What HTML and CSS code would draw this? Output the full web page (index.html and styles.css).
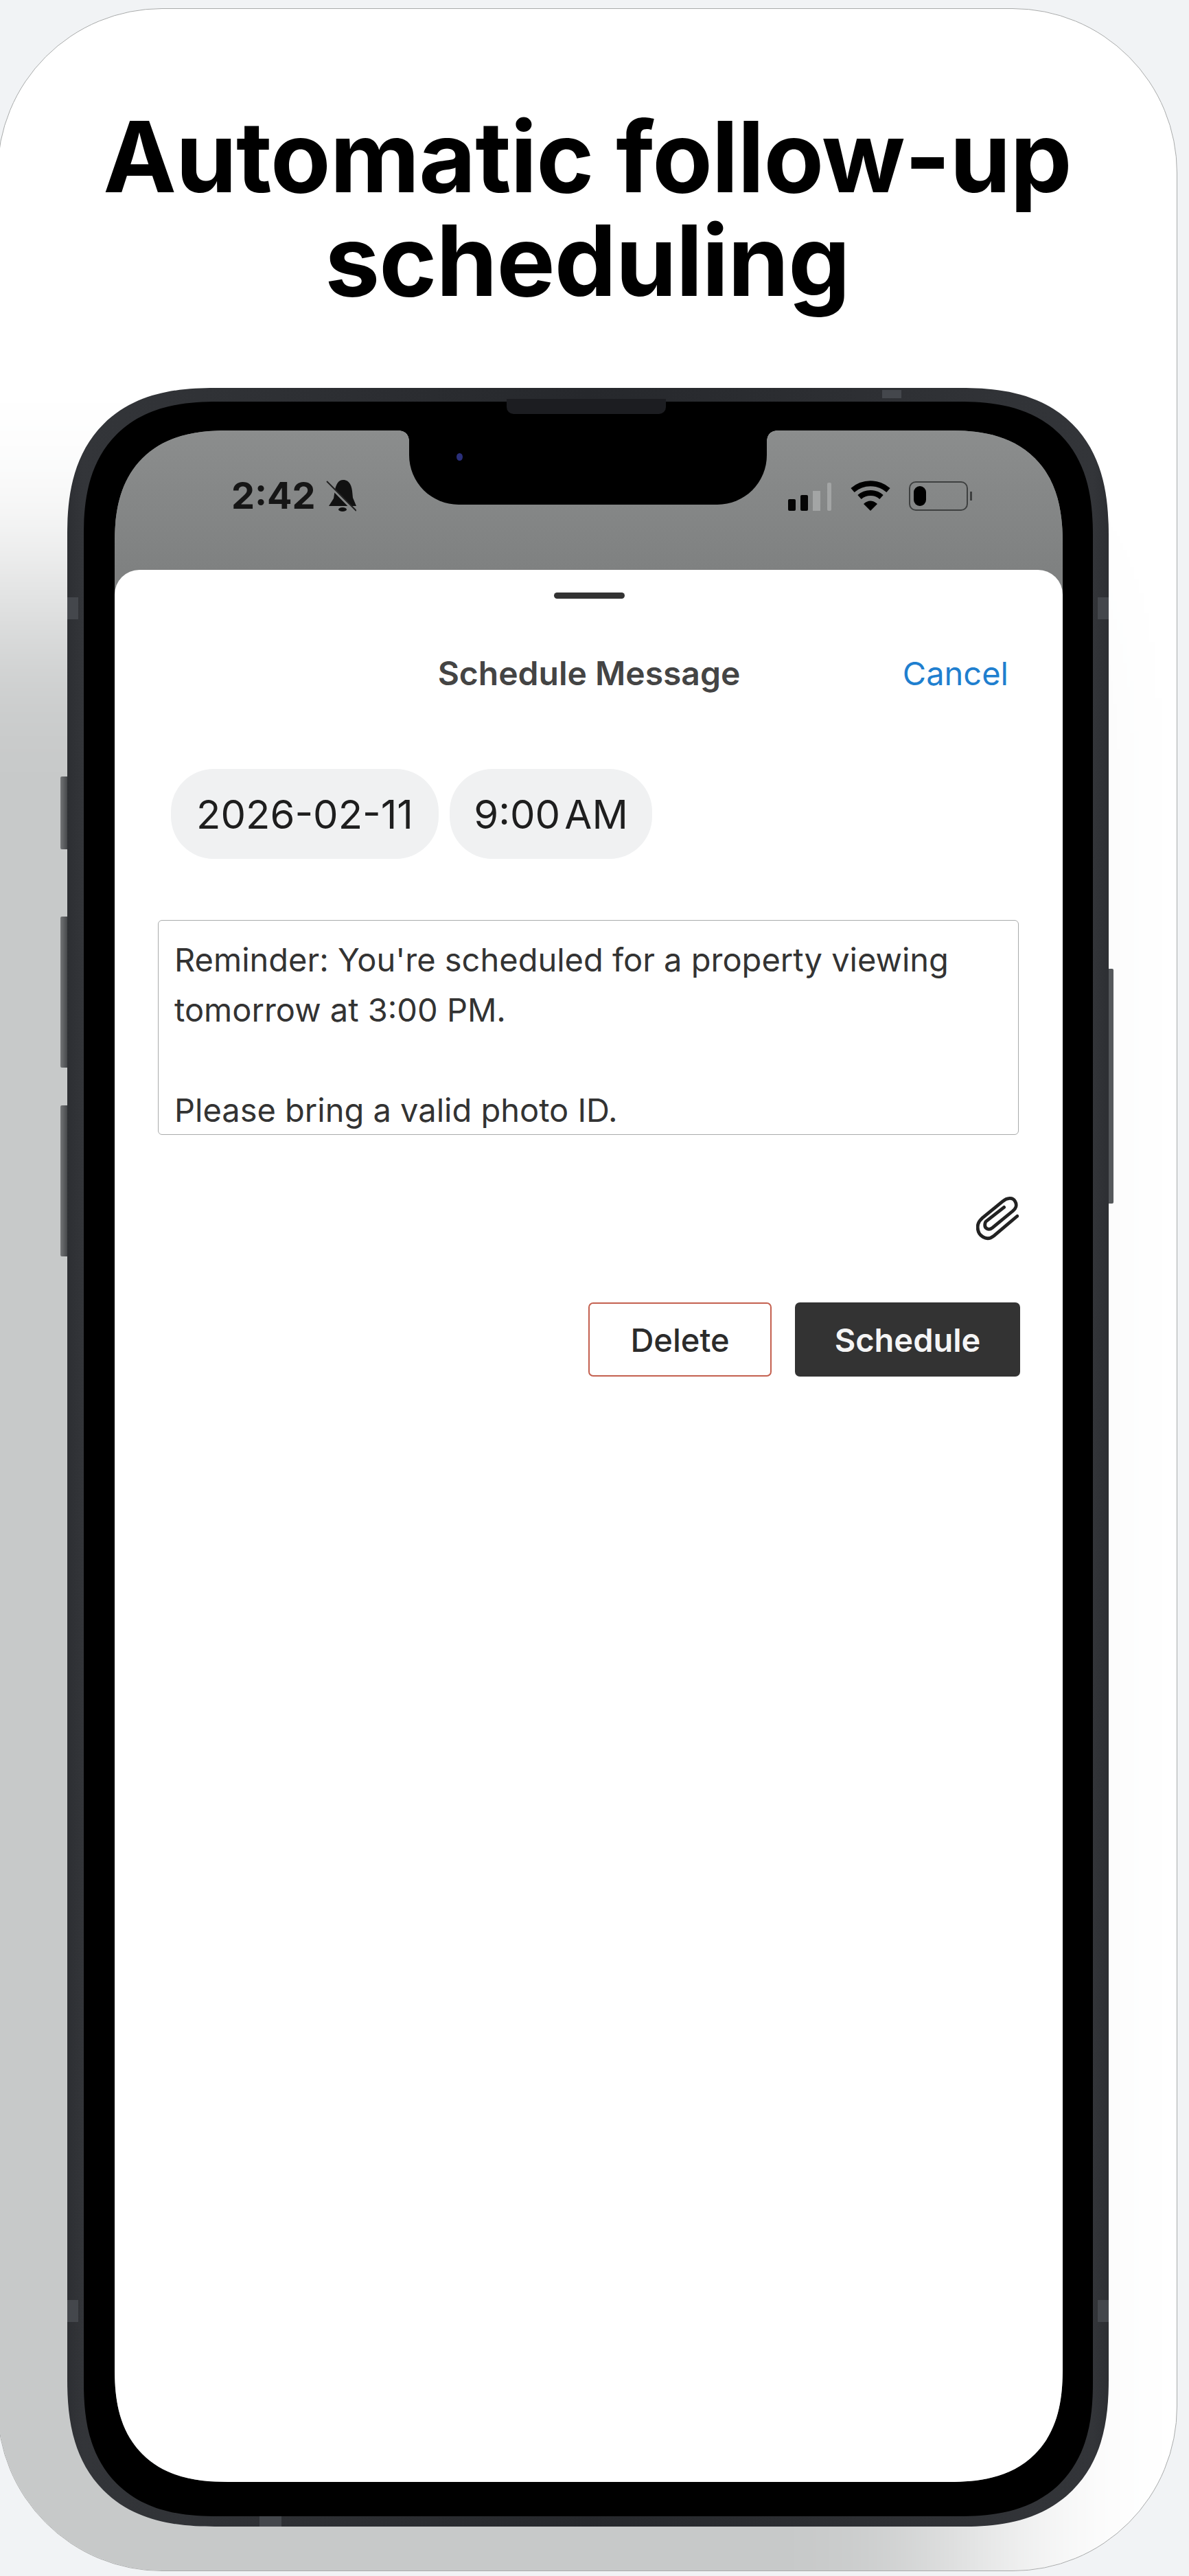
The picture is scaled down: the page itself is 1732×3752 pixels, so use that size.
FILE: index.html
```html
<!DOCTYPE html>
<html lang="en">
<head>
  <meta charset="UTF-8">
  <meta name="viewport" content="width=device-width, initial-scale=1.0">
  <title>Automatic follow-up scheduling</title>
  <link rel="stylesheet" href="styles.css">
</head>
<body>
  <div class="card">
    <h1>Automatic follow-up<br>scheduling</h1>

    <div class="phone">
      <span class="side-btn btn-mute"></span>
      <span class="side-btn btn-up"></span>
      <span class="side-btn btn-down"></span>
      <span class="side-btn btn-power"></span>
      <span class="band band-top"></span>
      <span class="band band-bottom"></span>
      <span class="band band-left-a"></span>
      <span class="band band-right-a"></span>
      <span class="band band-left-b"></span>
      <span class="band band-right-b"></span>
      <span class="speaker"></span>

      <div class="bezel">
        <div class="screen">
          <div class="notch"><span class="camera"></span></div>

          <div class="status-bar">
            <div class="status-left">
              <span class="clock">2:42</span>
              <svg class="bell" viewBox="0 0 44 48">
                <path d="M25 1c8 0 12 7 13 16l1 10 5 12H4l7-11 2-13C15 7 18 1 25 1z" fill="#111"/>
                <ellipse cx="24" cy="44" rx="6" ry="3" fill="#111"/>
                <line x1="2" y1="6" x2="43" y2="48" stroke="#868888" stroke-width="4"/>
                <line x1="1" y1="3" x2="44" y2="46" stroke="#222" stroke-width="2"/>
              </svg>
            </div>
            <div class="status-right">
              <div class="signal">
                <span class="bar bar-1"></span>
                <span class="bar bar-2"></span>
                <span class="bar bar-3"></span>
                <span class="bar bar-4"></span>
              </div>
              <svg class="wifi" viewBox="0 0 60 44">
                <path d="M4 14C19 1 41 1 56 14" fill="none" stroke="#000" stroke-width="8"/>
                <path d="M14 24C23 16 37 16 46 24" fill="none" stroke="#000" stroke-width="8"/>
                <path d="M20 34l10 10 10-10C34 28 26 28 20 34z" fill="#000"/>
              </svg>
              <div class="battery">
                <div class="battery-body"><span class="battery-level"></span></div>
                <span class="battery-tip"></span>
              </div>
            </div>
          </div>

          <div class="sheet">
            <div class="handle"></div>

            <div class="sheet-header">
              <span></span>
              <span class="sheet-title">Schedule Message</span>
              <a class="cancel">Cancel</a>
            </div>

            <div class="pills">
              <div class="pill pill-date">2026-02-11</div>
              <div class="pill pill-time">9:00 AM</div>
            </div>

            <div class="message">Reminder: You're scheduled for a property viewing
tomorrow at 3:00 PM.

Please bring a valid photo ID.</div>

            <div class="attach-row">
              <svg class="clip" viewBox="0 0 58 62">
                <path d="M56 27L24 54C14 62 2 54 2 42C2 36 5 33 8 30L36 7C42 2 50 1 53 7C56 12 54 17 50 20L22 43C17 47 11 44 12 38C12 36 13 34 15 33L38 15" fill="none" stroke="#222" stroke-width="4.500" stroke-linecap="round" stroke-linejoin="round"/>
              </svg>
            </div>

            <div class="actions">
              <button class="btn btn-delete">Delete</button>
              <button class="btn btn-schedule">Schedule</button>
            </div>
          </div>
        </div>
      </div>
    </div>
  </div>
</body>
</html>
```

FILE: styles.css
```css
html,
body {
  height: 3752px;
}

body {
  margin: 0;
  overflow: hidden;
  background: #f1f3f5;
  font-family: Inter, "Liberation Sans", sans-serif;
  color: #2b2b2b;
}

.card {
  box-sizing: border-box;
  width: 1719px;
  height: 3733px;
  margin: 12px 0 0 -4px;
  background: #fff;
  border: 1.5px solid #a9abab;
  border-radius: 240px;
  overflow: hidden;
  isolation: isolate;
  display: flex;
  flex-direction: column;
  align-items: center;
}

h1 {
  margin: 139px 0 111px;
  font-size: 143px;
  font-weight: 700;
  line-height: 151px;
  letter-spacing: -1px;
  text-align: center;
  color: #000;
}

.phone {
  position: relative;
  box-sizing: border-box;
  width: 1517px;
  height: 3115px;
  margin-left: 2px;
  padding: 20px 23px 15px 24px;
  background: linear-gradient(90deg, #2d2f33, #333539 1.500%, #26282c 50%, #333539 98.500%, #2d2f33);
  border-radius: 215px;
  corner-shape: superellipse(1.3);
}

/* cast shadow, down and to the left */
.phone::before {
  content: "";
  position: absolute;
  z-index: -1;
  inset: 80px;
  box-shadow: -400px 500px 340px 280px #c7c9c9;
}

.side-btn {
  position: absolute;
  width: 10px;
  background: linear-gradient(90deg, #737577, #46484b);
  border-radius: 2px 0 0 2px;
}

.btn-mute { left: -10px; top: 566px; height: 106px; }
.btn-up { left: -10px; top: 770px; height: 220px; }
.btn-down { left: -10px; top: 1045px; height: 220px; }
.btn-power {
  left: auto;
  right: -7px;
  width: 7px;
  top: 846px;
  height: 342px;
  border-radius: 0 2px 2px 0;
  background: #55585b;
}

.band {
  position: absolute;
  background: #44474c;
}

.band-top { top: 3px; left: 1187px; width: 28px; height: 12px; }
.band-bottom { bottom: 0; left: 280px; width: 32px; height: 15px; }
.band-left-a { left: 0; top: 305px; width: 16px; height: 32px; }
.band-right-a { right: 0; top: 305px; width: 16px; height: 32px; }
.band-left-b { left: 0; top: 2785px; width: 16px; height: 32px; }
.band-right-b { right: 0; top: 2785px; width: 16px; height: 32px; }

.speaker {
  position: absolute;
  z-index: 2;
  top: 16px;
  left: 640px;
  width: 232px;
  height: 22px;
  background: #1c1d21;
  border-radius: 0 0 10px 10px;
}

.bezel {
  height: 100%;
  box-sizing: border-box;
  padding: 42px 44px 50px 45px;
  background: #000;
  border-radius: 195px;
  corner-shape: superellipse(1.3);
}

.screen {
  position: relative;
  height: 100%;
  display: flex;
  flex-direction: column;
  background: #7f8181;
  border-radius: 165px;
  corner-shape: superellipse(1.3);
  overflow: hidden;
}

.notch {
  position: absolute;
  z-index: 1;
  top: 0;
  left: 429px;
  width: 521px;
  height: 108px;
  background: #000;
  border-radius: 0 0 72px 72px;
}

.notch::before,
.notch::after {
  content: "";
  position: absolute;
  top: 0;
  width: 14px;
  height: 14px;
}

.notch::before {
  left: -14px;
  background: radial-gradient(circle at 0 100%, transparent 13.500px, #000 14px);
}

.notch::after {
  right: -14px;
  background: radial-gradient(circle at 100% 100%, transparent 13.500px, #000 14px);
}

.camera {
  position: absolute;
  top: 33px;
  left: 69px;
  width: 9px;
  height: 11px;
  border-radius: 50%;
  background: #2a2f7a;
}

.status-bar {
  height: 203px;
  flex-shrink: 0;
  box-sizing: border-box;
  padding: 69px 132px 0 170px;
  display: flex;
  justify-content: space-between;
  align-items: flex-start;
  background: linear-gradient(#8b8d8d, #7f8181);
}

.status-left {
  display: flex;
  align-items: center;
  gap: 15px;
}

.clock {
  font-size: 54px;
  font-weight: 700;
  line-height: 52px;
  color: #161616;
}

.bell {
  width: 44px;
  height: 48px;
}

.status-right {
  display: flex;
  align-items: flex-end;
  margin-top: 4px;
}

.signal {
  display: flex;
  align-items: flex-end;
  gap: 7px;
  height: 42px;
  margin-right: 27px;
}

.bar {
  display: block;
  width: 11px;
  border-radius: 2px;
  background: #050505;
}

.bar-1 { height: 17px; }
.bar-2 { height: 23px; }
.bar-3 { height: 29px; background: #a3a5a5; border-radius: 0; }
.bar-4 { width: 6px; height: 41px; margin-left: 3px; background: #a3a5a5; }

.wifi {
  width: 60px;
  height: 44px;
  margin-right: 26px;
}

.battery {
  display: flex;
  align-items: center;
  gap: 3px;
}

.battery-body {
  box-sizing: border-box;
  width: 86px;
  height: 43px;
  padding: 5px;
  border: 2px solid #3e4040;
  border-radius: 10px;
}

.battery-level {
  display: block;
  width: 18px;
  height: 100%;
  border-radius: 9px;
  background: #000;
}

.battery-tip {
  width: 3px;
  height: 13px;
  background: #3e4040;
}

.sheet {
  flex: 1;
  box-sizing: border-box;
  padding: 33px 62px 0 63px;
  background: #fff;
  border-radius: 36px 36px 0 0;
}

.handle {
  width: 103px;
  height: 9px;
  margin: 0 auto;
  border-radius: 5px;
  background: #333;
}

.sheet-header {
  display: grid;
  grid-template-columns: 1fr auto 1fr;
  align-items: center;
  height: 60px;
  margin-top: 78px;
}

.sheet-title {
  font-size: 48px;
  font-weight: 600;
  color: #444;
}

.cancel {
  justify-self: end;
  margin-right: 17px;
  font-size: 47px;
  color: #1f7fcf;
}

.pills {
  display: flex;
  gap: 16px;
  margin: 110px 0 0 19px;
}

.pill {
  box-sizing: border-box;
  height: 131px;
  display: flex;
  align-items: center;
  justify-content: center;
  background: #f0f1f2;
  border-radius: 62px;
  font-size: 58px;
  color: #1e1e1e;
}

.pill-date { width: 390px; }
.pill-time { width: 295px; word-spacing: -10px; }

.message {
  box-sizing: border-box;
  height: 313px;
  margin: 89px 2px 0 0;
  padding: 20px 23px 0;
  border: 1.5px solid #a9abab;
  border-radius: 6px;
  font-size: 47px;
  line-height: 73px;
  white-space: pre-line;
  overflow: hidden;
  color: #333;
}

.attach-row {
  display: flex;
  justify-content: flex-end;
  margin: 89px 2px 0 0;
}

.clip {
  width: 62px;
  height: 67px;
}

.actions {
  display: flex;
  justify-content: flex-end;
  gap: 34px;
  margin-top: 88px;
}

.btn {
  box-sizing: border-box;
  height: 108px;
  border-radius: 7px;
  font-family: Inter, "Liberation Sans", sans-serif;
  font-size: 47px;
}

.btn-delete {
  width: 267px;
  background: #fff;
  border: 2px solid #c4604f;
  font-weight: 500;
  color: #2b2b2b;
}

.btn-schedule {
  width: 328px;
  background: #333;
  border: 0;
  font-weight: 600;
  color: #f5f5f5;
}
```
